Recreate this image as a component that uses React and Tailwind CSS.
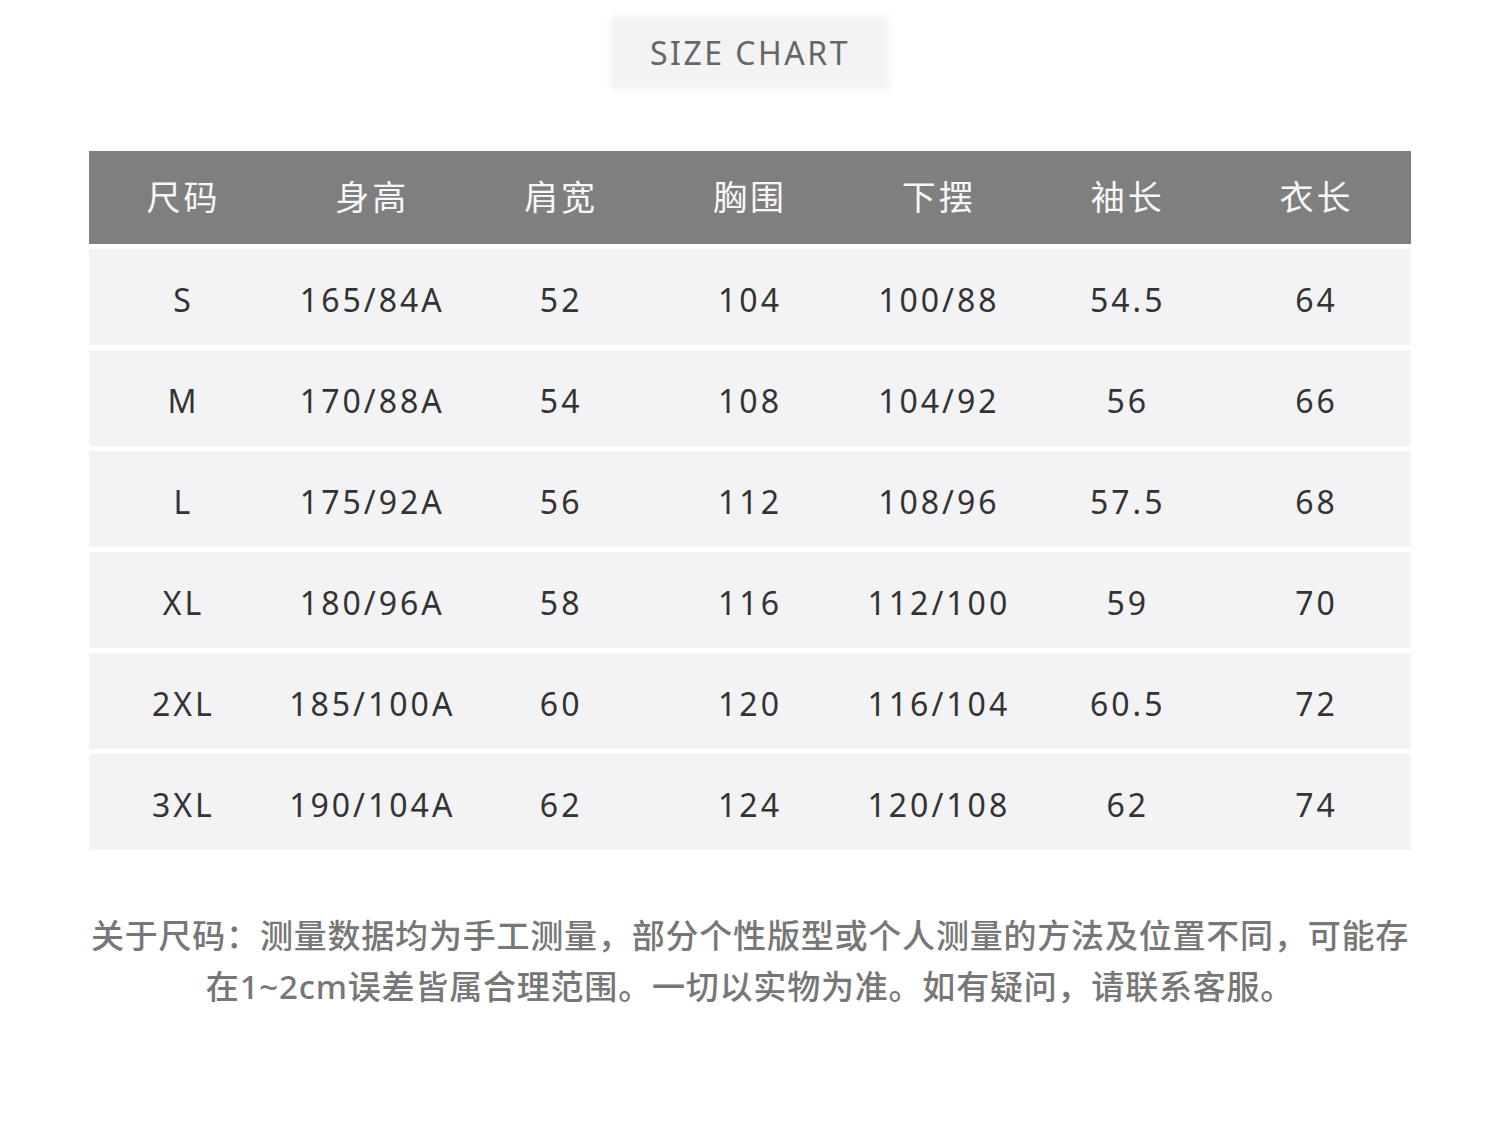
import React from 'react';

const headers = ['尺码', '身高', '肩宽', '胸围', '下摆', '袖长', '衣长'];

const rows = [
  ['S', '165/84A', '52', '104', '100/88', '54.5', '64'],
  ['M', '170/88A', '54', '108', '104/92', '56', '66'],
  ['L', '175/92A', '56', '112', '108/96', '57.5', '68'],
  ['XL', '180/96A', '58', '116', '112/100', '59', '70'],
  ['2XL', '185/100A', '60', '120', '116/104', '60.5', '72'],
  ['3XL', '190/104A', '62', '124', '120/108', '62', '74'],
];

const App = () => {
  return (
    <div className="h-[1137px] w-[1500px] bg-white font-['Noto_Sans','Noto_Sans_CJK_SC',sans-serif]">
      <div className="flex justify-center pt-[20px]">
        <div className="flex h-[66px] w-[270px] items-center justify-center bg-[#f3f3f5] text-[32px] tracking-[2.5px] text-[#666] shadow-[0_0_8px_4px_#f3f3f5]">
          SIZE CHART
        </div>
      </div>

      <div className="mx-[89px] mt-[65px] flex flex-col gap-[5px]">
        <div className="grid h-[93px] grid-cols-7 items-center bg-[#7f7f7f] text-[34px] tracking-[3px] text-[#f7f7f7]">
          {headers.map((h) => (
            <div className="text-center" key={h}>
              {h}
            </div>
          ))}
        </div>
        {rows.map((row) => (
          <div className="grid h-[96px] grid-cols-7 items-center bg-[#f3f3f5] pt-[6px] text-[32px] tracking-[3px] text-[#333]" key={row[0]}>
            {row.map((cell, i) => (
              <div className="text-center" key={i}>
                {cell}
              </div>
            ))}
          </div>
        ))}
      </div>

      <p className="mx-auto mt-[60px] w-[1400px] text-center text-[33px] leading-[51px] tracking-[0.8px] font-medium text-[#777]">
        关于尺码：测量数据均为手工测量，部分个性版型或个人测量的方法及位置不同，可能存
        <br />
        在1~2cm误差皆属合理范围。一切以实物为准。如有疑问，请联系客服。
      </p>
    </div>
  );
};

export default App;
